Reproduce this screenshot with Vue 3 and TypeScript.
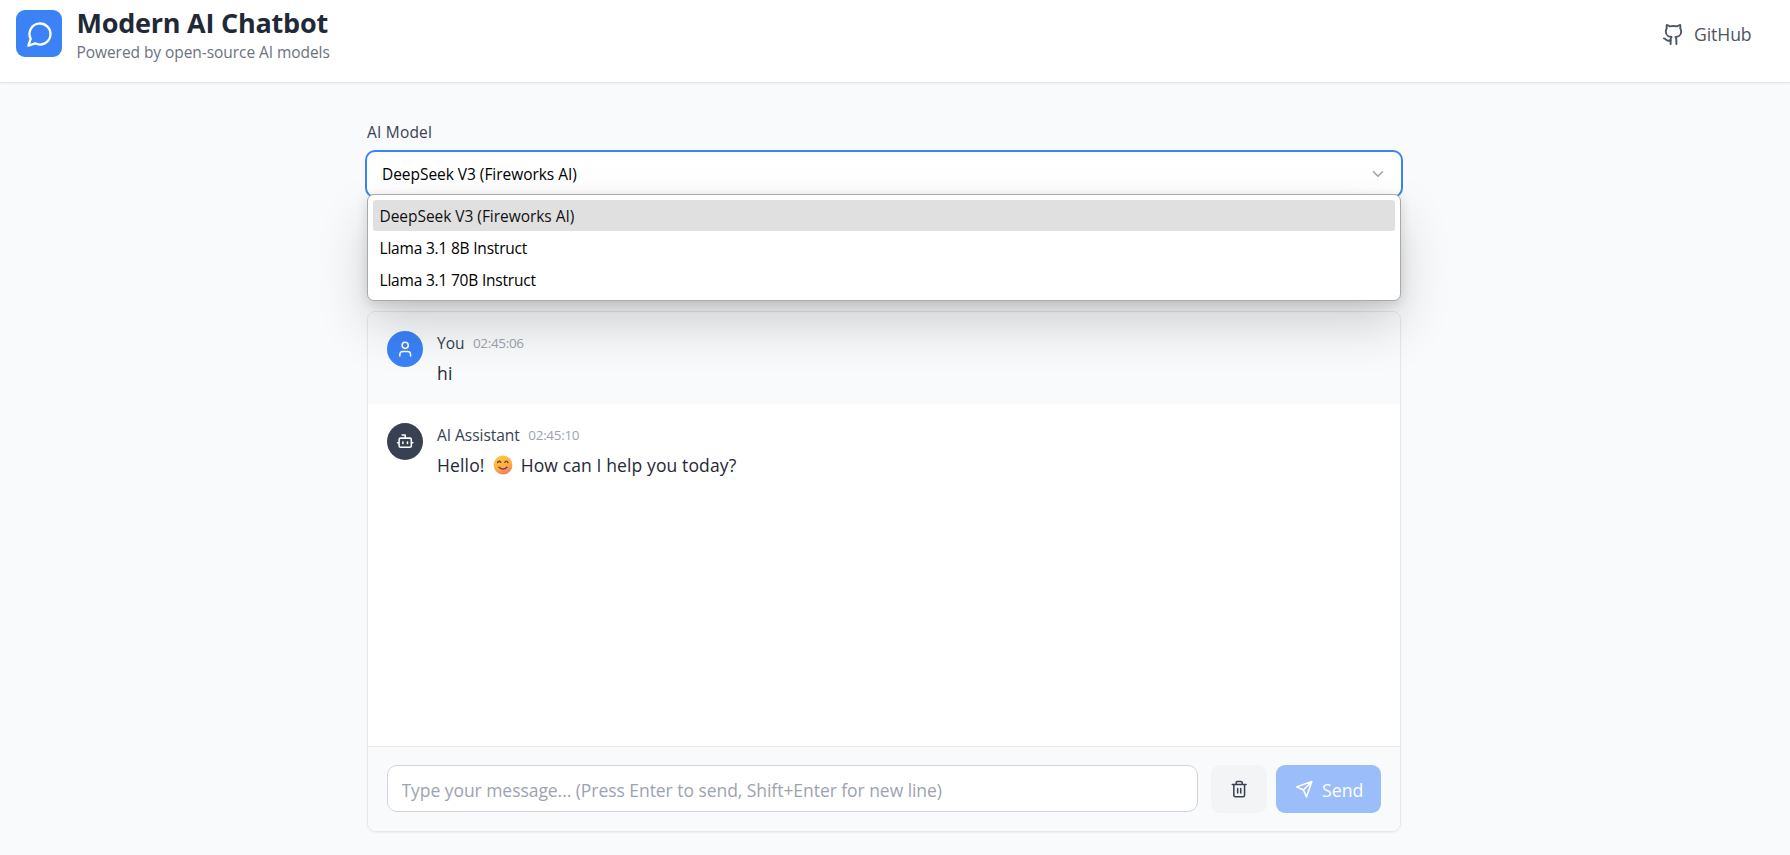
<script setup lang="ts">
import { ref } from 'vue'

interface Message {
  id: number
  role: 'user' | 'assistant'
  name: string
  time: string
  before: string
  after?: string
}

const models: string[] = [
  'DeepSeek V3 (Fireworks AI)',
  'Llama 3.1 8B Instruct',
  'Llama 3.1 70B Instruct',
]
const selected = ref<number>(0)
const draft = ref<string>('')
const messages: Message[] = [
  { id: 1, role: 'user', name: 'You', time: '02:45:06', before: 'hi' },
  { id: 2, role: 'assistant', name: 'AI Assistant', time: '02:45:10', before: 'Hello!', after: 'How can I help you today?' },
]
</script>

<template>
  <div class="page">
    <header class="header">
      <div class="brand">
        <div class="logo">
          <svg class="icon" width="28" height="28" viewBox="0 0 24 24"><path d="M7.9 20A9 9 0 1 0 4 16.1L2 22Z" /></svg>
        </div>
        <div>
          <h1 class="title">Modern AI Chatbot</h1>
          <p class="subtitle">Powered by open-source AI models</p>
        </div>
      </div>
      <a class="github">
        <svg class="icon" width="23" height="23" viewBox="0 0 24 24">
          <path d="M15 22v-4a4.8 4.8 0 0 0-1-3.5c3 0 6-2 6-5.5.08-1.25-.27-2.48-1-3.5.28-1.15.28-2.35 0-3.5 0 0-1 0-3 1.5-2.64-.5-5.36-.5-8 0C6 2 5 2 5 2c-.3 1.15-.3 2.35 0 3.5A5.403 5.403 0 0 0 4 9c0 3.500 3 5.500 6 5.500-.39.49-.68 1.050-.85 1.650-.17.6-.22 1.230-.15 1.850v4" />
          <path d="M9 18c-4.510 2-5-2-7-2" />
        </svg>
        <span class="github-text">GitHub</span>
      </a>
    </header>

    <main class="main">
      <label class="label"><span>AI Model</span></label>
      <div class="select">
        <span class="select-text">{{ models[selected] }}</span>
        <svg class="icon chevron" width="18" height="18" viewBox="0 0 24 24"><path d="m6 9 6 6 6-6" /></svg>
        <ul class="menu">
          <li v-for="(m, i) in models" :key="m" class="option" :class="{ active: i === selected }" @click="selected = i">
            <span>{{ m }}</span>
          </li>
        </ul>
      </div>

      <section class="chat">
        <div class="messages">
          <article v-for="m in messages" :key="m.id" class="message" :class="m.role">
            <div class="avatar">
              <svg v-if="m.role === 'user'" class="icon" width="18.400" height="18.400" viewBox="0 0 24 24">
                <path d="M19 21v-2a4 4 0 0 0-4-4H9a4 4 0 0 0-4 4v2" /><circle cx="12" cy="7" r="4" />
              </svg>
              <svg v-else class="icon" width="18.400" height="18.400" viewBox="0 0 24 24">
                <path d="M12 8V4H8" /><rect x="4" y="8" width="16" height="12" rx="2" />
                <path d="M2 14h2M20 14h2M15 13v2M9 13v2" />
              </svg>
            </div>
            <div class="body">
              <div class="meta">
                <span class="name">{{ m.name }}</span>
                <span class="time">{{ m.time }}</span>
              </div>
              <p class="text">
                <span class="before">{{ m.before }}</span>
                <template v-if="m.after">
                  <svg class="emoji" width="20" height="20" viewBox="0 0 20 20">
                    <defs>
                      <linearGradient id="face" x1="0.2" y1="0" x2="0.6" y2="1">
                        <stop offset="0" stop-color="#fdc93f" /><stop offset="0.6" stop-color="#fdae3f" /><stop offset="1" stop-color="#f5796c" />
                      </linearGradient>
                    </defs>
                    <circle cx="10" cy="10" r="9.400" fill="url(#face)" />
                    <path d="M4.600 7.600q1.300-2.600 3.200-.2M11.800 7.400q1.700-2.600 3.200.2M6 12.200q4 3.800 8 0" fill="none" stroke="#6b3a3f" stroke-width="1.300" stroke-linecap="round" />
                  </svg>
                  <span class="after">{{ m.after }}</span>
                </template>
              </p>
            </div>
          </article>
        </div>
        <form class="composer" @submit.prevent>
          <input v-model="draft" class="input" placeholder="Type your message... (Press Enter to send, Shift+Enter for new line)" />
          <button class="btn trash" type="button">
            <svg class="icon" width="18.400" height="18.400" viewBox="0 0 24 24">
              <path d="M3 6h18M19 6v14c0 1-1 2-2 2H7c-1 0-2-1-2-2V6M8 6V4c0-1 1-2 2-2h4c1 0 2 1 2 2v2M10 11v6M14 11v6" />
            </svg>
          </button>
          <button class="btn send" type="submit">
            <svg class="icon" width="18.400" height="18.400" viewBox="0 0 24 24"><path d="m22 2-7 20-4-9-9-4ZM22 2 11 13" /></svg>
            <span>Send</span>
          </button>
        </form>
      </section>
    </main>
  </div>
</template>

<style>
html, body { margin: 0; background: #f9fafc; overflow: hidden; }
</style>

<style scoped>
* { box-sizing: border-box; }
.page { height: 855px; font-family: "Open Sans", "Noto Sans", sans-serif; color: #1f2937; background: #f9fafc; white-space: nowrap; }
.icon { display: block; flex: none; fill: none; stroke: currentColor; stroke-width: 2; stroke-linecap: round; stroke-linejoin: round; }
.header { height: 83px; display: flex; justify-content: space-between; align-items: flex-start; padding: 10px 38.500px 0 16px; background: #fff; border-bottom: 1px solid #e5e7eb; box-shadow: 0 1px 2px rgba(0, 0, 0, .05); }
.brand { display: flex; gap: 14.500px; }
.logo { width: 46px; height: 47px; display: flex; align-items: center; justify-content: center; border-radius: 9px; background: #3b82f6; color: #fff; padding-left: 2px; }
.title { margin: -5px 0 0; font-size: 27px; line-height: 36px; font-weight: 700; letter-spacing: -.23px; }
.subtitle { margin: 0; font-size: 15.500px; line-height: 23px; letter-spacing: -.06px; color: #6b7280; }
.github { display: flex; align-items: center; gap: 9px; margin-top: 9px; height: 30px; font-size: 17.600px; letter-spacing: -.1px; color: #4b5563; }
.main { width: 1034px; margin: 0 0 0 367px; padding-top: 38px; }
.label { display: block; height: 23px; font-size: 15.500px; line-height: 23px; letter-spacing: .2px; color: #374151; }
.select { position: relative; display: flex; align-items: center; justify-content: space-between; height: 48px; margin: 6px -2px 0; padding: 0 14px 0 15px; border: 2px solid #3b82f6; border-radius: 10px; background: #fff; font-size: 15.500px; letter-spacing: -.04px; color: #000; }
.chevron { color: #9ca3af; }
.menu { position: absolute; top: 42px; left: 0; width: 1034px; height: 107px; margin: 0; padding: 5px; list-style: none; border: 1px solid #a9a9a9; border-radius: 7px; background: #fff; box-shadow: 0 3px 12px rgba(0, 0, 0, .12), 0 24px 50px rgba(0, 0, 0, .17); z-index: 2; }
.option { height: 31px; margin-bottom: 1px; padding-left: 6.500px; line-height: 33px; border-radius: 3px; letter-spacing: -.2px; }
.option.active { background: #e0e0e0; color: #101010; letter-spacing: -.04px; }
.chat { height: 521px; margin-top: 113px; display: flex; flex-direction: column; border: 1px solid #e5e7eb; border-radius: 9px; background: #fff; overflow: hidden; box-shadow: 0 1px 2px rgba(0, 0, 0, .05); }
.messages { flex: 1; }
.message { display: flex; gap: 14px; height: 92px; padding: 19px; }
.message.user { background: #f9fafc; }
.avatar { width: 36px; height: 36px; display: flex; align-items: center; justify-content: center; border-radius: 50%; background: #374151; color: #fff; }
.user .avatar { background: #3b82f6; }
.assistant .avatar { height: 37px; }
.meta { display: flex; gap: 8.500px; height: 23px; font-size: 15.500px; line-height: 25px; letter-spacing: -.03px; color: #374151; }
.time { font-size: 13.500px; line-height: 24px; letter-spacing: -.32px; color: #9ca3af; }
.text { display: flex; align-items: center; margin: 4px 0 0; height: 29px; font-size: 17.500px; }
.before { letter-spacing: .15px; }
.after { letter-spacing: .12px; }
.emoji { margin: 0 8px 0 8px; }
.composer { display: flex; height: 85px; padding: 18px 19px; border-top: 1px solid #e5e7eb; background: #f9fafc; }
.input { width: 811px; height: 47px; padding: 2px 14px 0 13.500px; border: 1px solid #d1d5db; border-radius: 10px; background: #fff; font: inherit; font-size: 17.500px; letter-spacing: -.05px; outline: none; }
.input::placeholder { color: #9ca3af; opacity: 1; }
.btn { display: flex; align-items: center; justify-content: center; height: 48px; padding: 0; border: 0; border-radius: 9px; font: inherit; font-size: 17.700px; }
.trash { width: 56px; margin-left: 13px; background: #f3f4f6; color: #374151; }
.send { width: 105px; margin-left: 9px; padding-left: 1px; gap: 9px; background: #9bbefb; color: #fff; }
.send span { padding-top: 2px; }
</style>
